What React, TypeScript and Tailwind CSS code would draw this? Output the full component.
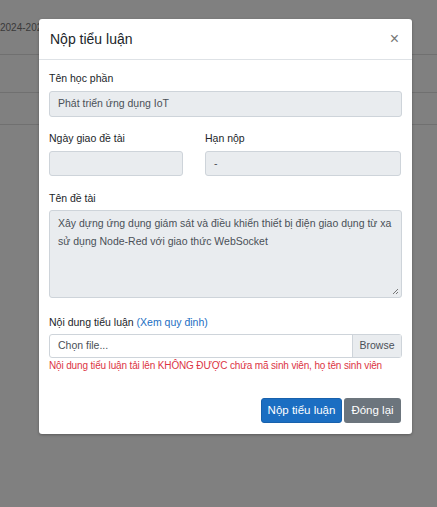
export default function App() {
  return (
    <div className="relative h-[507px] w-[437px] overflow-hidden bg-[#808080] font-['Liberation_Sans',Arial,sans-serif]">
      {/* page behind the overlay */}
      <div className="pt-[21px]">
        <div className="h-[34px] border-b border-[#707070] text-[10px] leading-[14px] text-[#3a3a3a]">2024-2025</div>
        <div className="h-[38px] border-b border-[#707070]" />
        <div className="h-[32px] border-b border-[#707070]" />
      </div>

      {/* modal */}
      <div className="absolute left-[39px] top-[19px] w-[373px] rounded-[3px] bg-white shadow-[0_1px_3px_rgba(0,0,0,0.3)]">
        <div className="flex h-[41px] items-center justify-between border-b border-[#dee2e6] px-[11px]">
          <h1 className="text-[14px] leading-none text-[#212529]">Nộp tiểu luận</h1>
          <span className="mr-[2px] text-[16px] leading-none text-[#777]">×</span>
        </div>

        <div className="px-[10px] pt-[11px] text-[10.5px] text-[#212529]">
          <label className="mb-[6px] block leading-[14px]">Tên học phần</label>
          <div className="mb-[14px] flex h-[26px] items-center rounded-[3px] border border-[#ced4da] bg-[#e9ecef] px-[8px] text-[#495057]">
            Phát triển ứng dụng IoT
          </div>

          <div className="mb-[15px] grid grid-cols-[134px_196px] gap-x-[22px]">
            <div>
              <label className="mb-[6px] block leading-[14px]">Ngày giao đề tài</label>
              <div className="h-[25px] rounded-[3px] border border-[#ced4da] bg-[#e9ecef]" />
            </div>
            <div>
              <label className="mb-[6px] block leading-[14px]">Hạn nộp</label>
              <div className="flex h-[25px] items-center rounded-[3px] border border-[#ced4da] bg-[#e9ecef] px-[8px] text-[#495057]">-</div>
            </div>
          </div>

          <label className="mb-[5px] block leading-[14px]">Tên đề tài</label>
          <div className="relative mb-[17px] h-[88px] rounded-[3px] border border-[#ced4da] bg-[#e9ecef] px-[8px] pt-[3px] leading-[18px] text-[#495057]">
            Xây dựng ứng dụng giám sát và điều khiển thiết bị điện giao dụng từ xa sử dụng Node-Red với giao thức WebSocket
            <svg className="absolute bottom-[2px] right-[2px]" width="7" height="7" viewBox="0 0 7 7">
              <path d="M6 1L1 6M6 4L4 6" stroke="#777" strokeWidth="1" />
            </svg>
          </div>

          <label className="mb-[5px] block leading-[14px]">
            Nội dung tiểu luận <span className="text-[#1b6ec2]">(Xem quy định)</span>
          </label>
          <div className="flex h-[24px] rounded-[3px] border border-[#ced4da] text-[#495057]">
            <div className="flex flex-1 items-center px-[8px]">Chọn file...</div>
            <div className="flex w-[49px] items-center justify-center border-l border-[#ced4da] bg-[#e9ecef]">Browse</div>
          </div>
          <p className="mt-[2px] whitespace-nowrap text-[10px] leading-[12px] tracking-[-0.15px] text-[#dc3545]">
            Nội dung tiểu luận tải lên KHÔNG ĐƯỢC chứa mã sinh viên, họ tên sinh viên
          </p>
        </div>

        <div className="flex justify-end gap-[2px] px-[11px] pb-[11px] pt-[26px] text-[11.5px]">
          <button className="h-[25px] w-[81px] rounded-[3px] border border-[#1861ac] bg-[#1b6ec2] text-white">Nộp tiểu luận</button>
          <button className="h-[25px] w-[57px] rounded-[3px] bg-[#6c757d] text-white">Đóng lại</button>
        </div>
      </div>
    </div>
  );
}
